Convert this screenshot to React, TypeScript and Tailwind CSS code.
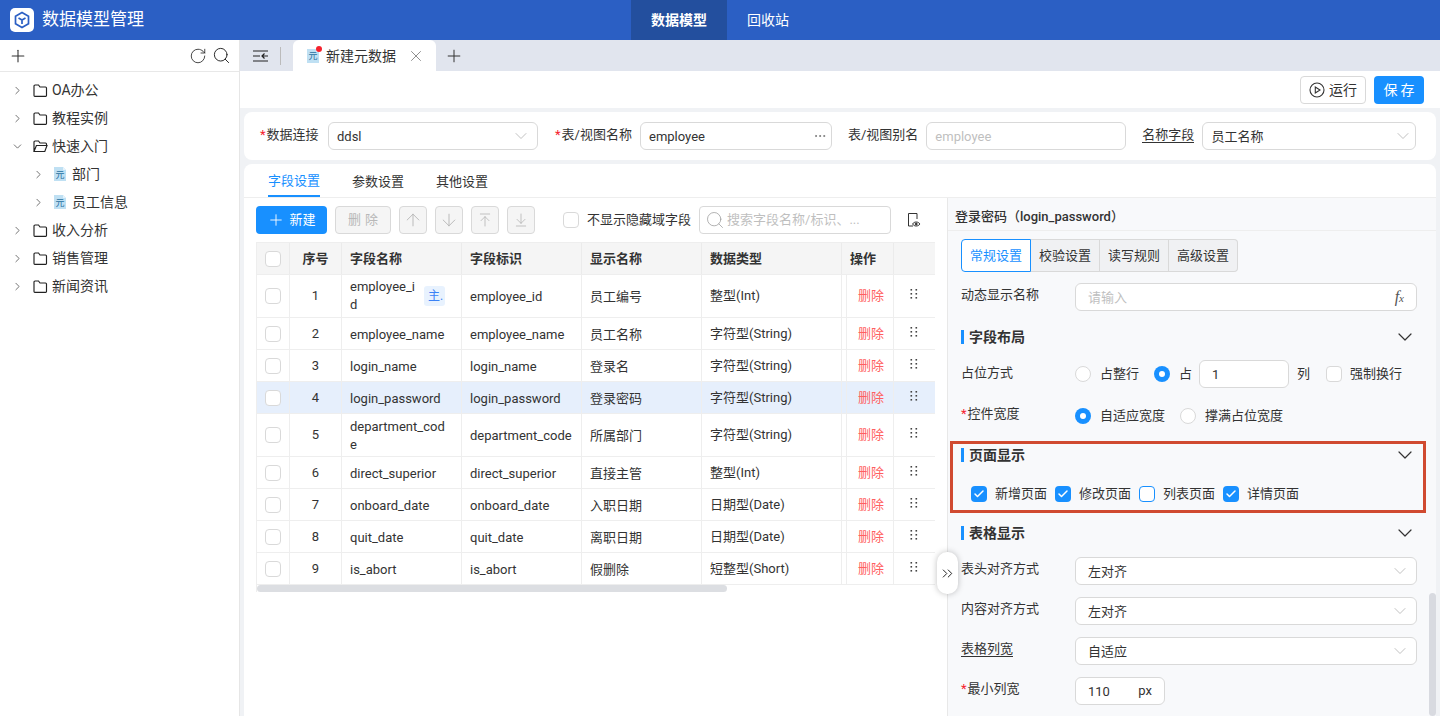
import React from "react";
import { ChevronRight, ChevronDown, Plus, RotateCw, Search, X, ArrowUp, ArrowDown, ArrowUpToLine, ArrowDownToLine, Ellipsis, ChevronsRight, Check } from "lucide-react";

const FONT = "font-['Roboto','Noto_Sans_CJK_SC',sans-serif]";

function Folder({ open }: { open?: boolean }) {
  return open ? (
    <svg width="15" height="13" viewBox="0 0 15 13" fill="none" stroke="#222" strokeWidth="1.15" className="shrink-0">
      <path d="M1 11.5V2a1 1 0 0 1 1-1h3.5l1.5 2h5.5a1 1 0 0 1 1 1v1.5M1 11.5h10.8l2.2-6H3.4L1 11.5z" />
    </svg>
  ) : (
    <svg width="15" height="13" viewBox="0 0 15 13" fill="none" stroke="#222" strokeWidth="1.15" className="shrink-0">
      <path d="M1 2a1 1 0 0 1 1-1h3.5l1.5 2h5.5a1 1 0 0 1 1 1v7.5a.8.8 0 0 1-.8.8H1.8a.8.8 0 0 1-.8-.8V2z" />
    </svg>
  );
}

function MetaIcon() {
  return (
    <span className="relative w-[14px] h-[14px] shrink-0 block">
      <svg width="14" height="14" viewBox="0 0 14 14" className="block">
        <path d="M1 0h9l3 3v11H1z" fill="#bfe0f3" />
        <path d="M10 0l3 3h-3z" fill="#e6f3fb" />
      </svg>
      <span className="absolute inset-0 flex items-center justify-center text-[9px] leading-none text-[#1f6f9f] pt-[2px]">元</span>
    </span>
  );
}

function TreeRow({ label, indent, open, meta }: { label: string; indent?: boolean; open?: boolean; meta?: boolean }) {
  return (
    <div className={`h-7 flex items-center text-[14px] text-[#333] ${indent ? "pl-[32px]" : "pl-[11px]"}`}>
      {open ? <ChevronDown size={13} strokeWidth={1.5} color="#555" /> : <ChevronRight size={13} strokeWidth={1.5} color="#555" />}
      <span className={`flex items-center ${meta ? "ml-[8px] gap-[5px]" : "ml-[9px] gap-[4px]"}`}>
        {meta ? <MetaIcon /> : <Folder open={open} />}
        <span>{label}</span>
      </span>
    </div>
  );
}

function Label({ children, req, under }: { children: React.ReactNode; req?: boolean; under?: boolean }) {
  return (
    <span className={`text-[13px] text-[#333] whitespace-nowrap ${under ? "border-b border-[#333] leading-[16px]" : ""}`}>
      {req && <span className="text-[#f5222d] mr-[1px]">*</span>}
      {children}
    </span>
  );
}

function Box({ className, children, muted }: { className?: string; children?: React.ReactNode; muted?: boolean }) {
  return (
    <div className={`h-7 border border-[#d9d9d9] rounded-[6px] bg-white flex items-center justify-between text-[13px] [&>span:first-child]:translate-y-px ${muted ? "text-[#bfbfbf]" : "text-[#333]"} ${className ?? ""}`}>
      {children}
    </div>
  );
}

const Chev = () => <ChevronDown size={20} strokeWidth={1.1} color="#bbb" />;

function IconBtn({ children }: { children: React.ReactNode }) {
  return (
    <div className="w-7 h-7 border border-[#d9d9d9] rounded-[4px] bg-[#f5f5f5] flex items-center justify-center text-[#b0b0b0]">
      {children}
    </div>
  );
}

function Cb({ className }: { className?: string }) {
  return <div className={`w-4 h-4 border border-[#d9d9d9] rounded-[4px] bg-white shrink-0 ${className ?? ""}`} />;
}

const rows = [
  { n: 1, name: "employee_id", id: "employee_id", disp: "员工编号", type: "整型(Int)", tall: true, pk: true },
  { n: 2, name: "employee_name", id: "employee_name", disp: "员工名称", type: "字符型(String)" },
  { n: 3, name: "login_name", id: "login_name", disp: "登录名", type: "字符型(String)" },
  { n: 4, name: "login_password", id: "login_password", disp: "登录密码", type: "字符型(String)", sel: true },
  { n: 5, name: "department_code", id: "department_code", disp: "所属部门", type: "字符型(String)", tall: true },
  { n: 6, name: "direct_superior", id: "direct_superior", disp: "直接主管", type: "整型(Int)" },
  { n: 7, name: "onboard_date", id: "onboard_date", disp: "入职日期", type: "日期型(Date)" },
  { n: 8, name: "quit_date", id: "quit_date", disp: "离职日期", type: "日期型(Date)" },
  { n: 9, name: "is_abort", id: "is_abort", disp: "假删除", type: "短整型(Short)" },
];

const colW = ["w-[33px]", "w-[52px]", "w-[120px]", "w-[120px]", "w-[120px]", "w-[140px]"];

function HeaderRow() {
  const hs = ["", "序号", "字段名称", "字段标识", "显示名称", "数据类型"];
  return (
    <div className="flex h-8 bg-[#f5f5f5] text-[13px] font-bold text-[#333] border-b border-[#eee]">
      {hs.map((h, i) => (
        <div key={i} className={`${colW[i]} shrink-0 border-r border-[#ebebeb] flex items-center ${i < 2 ? "justify-center" : "pl-2"}`}>
          {i === 0 ? <div className="w-4 h-4 border border-[#d9d9d9] rounded-[4px] bg-white" /> : h}
        </div>
      ))}
      <div className="w-[52px] shrink-0 border-r border-[#ebebeb] flex items-center pl-2">操作</div>
      <div className="flex-1" />
    </div>
  );
}

function Dots() {
  return (
    <svg width="10" height="12" viewBox="0 0 10 12" fill="#444">
      {[1, 5, 9].map((y) => (
        <g key={y}><rect x="1.5" y={y} width="1.6" height="1.6" /><rect x="6.5" y={y} width="1.6" height="1.6" /></g>
      ))}
    </svg>
  );
}

function Row({ r }: { r: (typeof rows)[number] }) {
  return (
    <div className={`flex ${r.tall ? "h-[43px]" : "h-8"} text-[13px] text-[#333] border-b border-[#eee] ${r.sel ? "bg-[#e6effc]" : "bg-white"}`}>
      <div className={`${colW[0]} shrink-0 border-r border-[#eee] flex items-center justify-center`}><Cb /></div>
      <div className={`${colW[1]} shrink-0 border-r border-[#eee] flex items-center justify-center`}>{r.n}</div>
      <div className={`${colW[2]} shrink-0 border-r border-[#eee] flex items-center pl-2`}>
        {r.pk ? (
          <>
            <span className="w-[66px] break-all leading-[18px]">{r.name}</span>
            <span className="ml-2 w-[21px] h-5 rounded-[3px] bg-[#e8f2fe] text-[#3b82f6] text-[12px] leading-5 whitespace-nowrap pl-[4px]">主.</span>
          </>
        ) : (
          <span className="max-w-[96px] break-all leading-[18px] translate-y-px">{r.name}</span>
        )}
      </div>
      <div className={`${colW[3]} shrink-0 border-r border-[#eee] flex items-center pl-2`}><span className="translate-y-px">{r.id}</span></div>
      <div className={`${colW[4]} shrink-0 border-r border-[#eee] flex items-center pl-2`}><span className="translate-y-px">{r.disp}</span></div>
      <div className={`${colW[5]} shrink-0 border-r border-[#eee] flex items-center pl-2`}>{r.type}</div>
      <div className="w-[5px] shrink-0 border-r border-[#eee]" />
      <div className="w-[47px] shrink-0 border-r border-[#eee] flex items-center pl-[11px] text-[#ff5f61]"><span>删除</span></div>
      <div className="flex-1 flex items-center justify-center pb-[4px] pr-[2px]"><Dots /></div>
    </div>
  );
}

function Section({ title }: { title: string }) {
  return (
    <div className="flex items-center justify-between pr-0">
      <div className="flex items-center text-[14px] font-bold text-[#333] leading-[14px]">
        <span className="w-[3px] h-[14px] bg-[#1890ff] mr-[5px]" />
        {title}
      </div>
      <ChevronDown size={24} strokeWidth={1.2} color="#333" className="-my-[5px]" />
    </div>
  );
}

function Radio({ on }: { on?: boolean }) {
  return on ? (
    <span className="w-4 h-4 rounded-full bg-[#1890ff] flex items-center justify-center shrink-0"><span className="w-[6px] h-[6px] rounded-full bg-white block" /></span>
  ) : (
    <span className="block w-4 h-4 rounded-full border border-[#d9d9d9] bg-white shrink-0" />
  );
}

function BlueCheck({ on, label }: { on?: boolean; label: string }) {
  return (
    <div className="flex items-center gap-2 w-[84px]">
      {on ? (
        <span className="w-4 h-4 rounded-[4px] bg-[#1890ff] flex items-center justify-center shrink-0"><Check size={12} strokeWidth={3} color="#fff" /></span>
      ) : (
        <span className="w-4 h-4 rounded-[4px] border border-[#1890ff] bg-white shrink-0" />
      )}
      <span className="text-[13px] text-[#333] whitespace-nowrap">{label}</span>
    </div>
  );
}

function FormRow({ label, children, className, lm }: { label: React.ReactNode; children: React.ReactNode; className?: string; lm?: string }) {
  return (
    <div className={`flex items-center ${className ?? ""}`}>
      <div className={`w-[114px] shrink-0 ${lm ?? "-mt-[6px]"}`}>{label}</div>
      {children}
    </div>
  );
}

const Tx = ({ className, children }: { className?: string; children: React.ReactNode }) => (
  <span className={`text-[13px] text-[#333] whitespace-nowrap ${className ?? ""}`}>{children}</span>
);

export default function App() {
  return (
    <div className={`${FONT} w-[1440px] h-[716px] overflow-hidden flex flex-col bg-white`}>
      <header className="h-10 shrink-0 bg-[#2b5fc4] flex items-center relative">
        <div className="w-[631px] flex items-center pl-[10px] gap-[8px] shrink-0">
          <div className="w-6 h-6 bg-white rounded-[5px] flex items-center justify-center">
            <svg width="18" height="18" viewBox="0 0 18 18" fill="none" stroke="#2b5fc4" strokeWidth="1.7">
              <path d="M9 1.5l6.5 3.7v7.6L9 16.5l-6.5-3.7V5.2z" />
              <path d="M5.5 7L9 9l3.5-2M9 9v4" />
            </svg>
          </div>
          <span className="text-[17px] text-white">数据模型管理</span>
        </div>
        <div className="h-10 w-24 bg-[#234f9e] flex items-center justify-center text-white text-[14px] font-bold">数据模型</div>
        <div className="h-10 w-[82px] flex items-center justify-center text-white text-[14px]">回收站</div>
      </header>

      <div className="flex-1 flex min-h-0">
        <aside className="w-[240px] shrink-0 border-r border-[#e6e6e6] bg-white">
          <div className="h-[32px] border-b border-[#e8e8e8] flex items-center justify-between pl-[8px] pr-[8px]">
            <Plus size={20} strokeWidth={1.3} color="#333" />
            <div className="flex items-center gap-[5px]">
              <RotateCw size={18} strokeWidth={1.1} color="#222" />
              <Search size={19} strokeWidth={1.2} color="#222" />
            </div>
          </div>
          <div className="pt-[4px]">
            <TreeRow label="OA办公" />
            <TreeRow label="教程实例" />
            <TreeRow label="快速入门" open />
            <TreeRow label="部门" indent meta />
            <TreeRow label="员工信息" indent meta />
            <TreeRow label="收入分析" />
            <TreeRow label="销售管理" />
            <TreeRow label="新闻资讯" />
          </div>
        </aside>

        <main className="flex-1 min-w-0 flex flex-col bg-[#f0f2f5]">
          <div className="h-[31px] shrink-0 bg-[#e1e5ee] flex items-stretch">
            <div className="w-[40px] flex items-center pl-[13px]">
              <svg width="16" height="12" viewBox="0 0 16 12" fill="none" stroke="#222" strokeWidth="1.2">
                <path d="M0 1h15M0 6h7M0 11h15M15 6H9M11.5 3.5L9 6l2.5 2.5" />
              </svg>
            </div>
            <div className="w-px h-[18px] bg-[#bbb] self-center" />
            <div className="ml-[12px] w-[143px] bg-white rounded-t-[6px] flex items-center pl-[13px] text-[14px] text-[#333] relative">
              <MetaIcon />
              <span className="absolute left-[23px] top-[6px] w-[6px] h-[6px] rounded-full bg-[#f5222d]" />
              <span className="ml-[6px] translate-y-px">新建元数据</span>
              <X size={18} strokeWidth={1.1} color="#777" className="ml-[11px]" />
            </div>
            <div className="w-[36px] flex items-center justify-center"><Plus size={20} strokeWidth={1.2} color="#333" /></div>
          </div>
          <div className="h-[37px] shrink-0 bg-white flex items-center justify-end gap-2 pr-[16px]">
            <div className="h-7 w-[66px] border border-[#d9d9d9] rounded-[4px] flex items-center justify-center gap-[4px] text-[14px] text-[#333]">
              <svg width="16" height="16" viewBox="0 0 16 16" fill="none" stroke="#333" strokeWidth="1.1">
                <circle cx="8" cy="8" r="7" />
                <path d="M6.3 5v6L11 8z" />
              </svg>
              <span className="translate-y-px">运行</span>
            </div>
            <div className="h-7 w-[50px] rounded-[4px] bg-[#1890ff] flex items-center justify-center text-white text-[14px] tracking-[3px] pl-[3px]"><span className="translate-y-px">保存</span></div>
          </div>

          <div className="h-[48px] shrink-0 mt-1 mx-1 bg-white rounded-[8px] flex items-center text-[13px]">
            <div className="pl-[16px] w-[84px] shrink-0 -mt-[3px]"><Label req>数据连接</Label></div>
            <Box className="w-[210px] pl-2 pr-[6px]"><span>ddsl</span><Chev /></Box>
            <div className="ml-[17px] shrink-0 -mt-[3px]"><Label req>表/视图名称</Label></div>
            <Box className="w-[192px] ml-[8px] pl-2 pr-[4px]"><span>employee</span><Ellipsis size={14} strokeWidth={1.3} color="#666" /></Box>
            <div className="ml-[16px] shrink-0 -mt-[3px]"><Label>表/视图别名</Label></div>
            <Box muted className="w-[200px] ml-[8px] pl-2"><span>employee</span></Box>
            <div className="ml-[16px] shrink-0 -mt-[3px]"><Label under>名称字段</Label></div>
            <Box className="w-[214px] ml-[8px] pl-2 pr-[2px]"><span>员工名称</span><Chev /></Box>
          </div>

          <div className="flex-1 min-h-0 mt-1 mx-1 bg-white rounded-t-[8px] flex flex-col">
            <div className="h-[34px] shrink-0 border-b border-[#eee] flex items-stretch pl-[24px] gap-[32px] text-[13px] text-[#333]">
              <div className="flex items-center text-[#1890ff] border-b-2 border-[#1890ff]"><span className="translate-y-px">字段设置</span></div>
              <div className="flex items-center"><span className="translate-y-px">参数设置</span></div>
              <div className="flex items-center"><span className="translate-y-px">其他设置</span></div>
            </div>
            <div className="flex-1 min-h-0 flex">
              <div className="w-[703px] shrink-0 relative z-10 pl-[12px] pr-[12px]">
                <div className="h-[28px] mt-[8px] flex items-center">
                  <div className="w-[71px] h-7 rounded-[4px] bg-[#1890ff] flex items-center justify-center gap-[4px] text-white text-[13px]">
                    <Plus size={18} strokeWidth={1.2} />新建
                  </div>
                  <div className="ml-2 w-[56px] h-7 rounded-[4px] border border-[#d9d9d9] bg-[#f5f5f5] flex items-center justify-center text-[#b8b8b8] text-[13px] tracking-[4px] pl-[4px]">删除</div>
                  <div className="ml-2 flex gap-[8px]">
                    <IconBtn><ArrowUp size={20} strokeWidth={1} /></IconBtn>
                    <IconBtn><ArrowDown size={20} strokeWidth={1} /></IconBtn>
                    <IconBtn><ArrowUpToLine size={16} strokeWidth={1.1} /></IconBtn>
                    <IconBtn><ArrowDownToLine size={16} strokeWidth={1.1} /></IconBtn>
                  </div>
                  <div className="ml-[28px] flex items-center gap-2 text-[13px] text-[#333] whitespace-nowrap"><Cb />不显示隐藏域字段</div>
                  <div className="ml-2 w-[192px] h-7 border border-[#d9d9d9] rounded-[4px] flex items-center pl-[5px] gap-[2px] text-[13px] text-[#bfbfbf] whitespace-nowrap">
                    <Search size={20} strokeWidth={0.9} color="#999" className="shrink-0" />搜索字段名称/标识、...
                  </div>
                  <div className="ml-[15px]">
                    <svg width="16" height="16" viewBox="0 0 16 16" fill="none" stroke="#333" strokeWidth="1">
                      <path d="M7 14H2.5V1.5H11V7" />
                      <path d="M6.5 12c1-1.4 2.2-2 3.7-2s2.7.6 3.8 2c-1.1 1.4-2.3 2-3.8 2s-2.7-.6-3.7-2z" />
                      <circle cx="10.2" cy="12" r="1" fill="#333" />
                    </svg>
                  </div>
                </div>
                <div className="mt-[8px] w-[679px] border-t border-l border-[#eee]">
                  <HeaderRow />
                  {rows.map((r) => <Row key={r.n} r={r} />)}
                  <div className="h-[7px] w-[470px] bg-[#dcdee2] rounded-[4px]" />
                </div>
                <div className="absolute right-[-11px] top-[354px] w-[21px] h-[42px] bg-white rounded-[10px] shadow-[0_0_6px_rgba(0,0,0,0.25)] flex items-center justify-center">
                  <ChevronsRight size={17} strokeWidth={1.4} color="#222" />
                </div>
              </div>

              <div className="flex-1 min-w-0 bg-[#f8f9fb] border-l border-[#e8e8e8] relative overflow-hidden">
                <div className="h-[33px] border-b border-[#eee] flex items-center pl-[7px] pt-[5px] text-[13px] text-[#333] font-medium">登录密码（login_password）</div>
                <div className="ml-[13px] mt-[8px] inline-flex text-[13px] text-[#333] h-[33px]">
                  <div className="w-[70px] border border-[#1890ff] rounded-l-[4px] bg-white text-[#1890ff] flex items-center justify-center">常规设置</div>
                  <div className="w-[69px] border-y border-r border-[#d9d9d9] bg-[#f0f1f3] flex items-center justify-center">校验设置</div>
                  <div className="w-[69px] border-y border-r border-[#d9d9d9] bg-[#f0f1f3] flex items-center justify-center">读写规则</div>
                  <div className="w-[69px] border-y border-r border-[#d9d9d9] rounded-r-[4px] bg-[#f0f1f3] flex items-center justify-center">高级设置</div>
                </div>

                <div className="pl-[13px] pr-[19px]">
                  <FormRow label={<Label>动态显示名称</Label>} className="mt-[11px]">
                    <Box muted className="w-[342px] pl-3 pr-3"><span>请输入</span><span className="font-['Liberation_Serif',serif] italic text-[#555] text-[16px] leading-none">f<span className="text-[11px]">x</span></span></Box>
                  </FormRow>
                  <div className="mt-[19px]"><Section title="字段布局" /></div>
                  <FormRow label={<Label>占位方式</Label>} lm="-mt-[4px]" className="mt-[16px] h-[28px]">
                    <Radio /><Tx className="ml-[9px]">占整行</Tx>
                    <div className="ml-[15px]"><Radio on /></div><Tx className="ml-[9px]">占</Tx>
                    <Box className="w-[90px] ml-[7px] pl-3"><span>1</span></Box>
                    <Tx className="ml-[8px]">列</Tx>
                    <Cb className="ml-[16px]" /><Tx className="ml-[8px]">强制换行</Tx>
                  </FormRow>
                  <FormRow label={<Label req>控件宽度</Label>} lm="-mt-[6px]" className="mt-[14px] h-[28px]">
                    <Radio on /><Tx className="ml-[9px]">自适应宽度</Tx>
                    <div className="ml-[15px]"><Radio /></div><Tx className="ml-[9px]">撑满占位宽度</Tx>
                  </FormRow>
                  <div className="mt-[11px] -ml-[11px] w-[476px] h-[72px] border-[3px] border-[#d04a30] pl-[8px] pr-[6px] pt-[4px]">
                    <Section title="页面显示" />
                    <div className="flex mt-[22px] pl-[10px]">
                      <BlueCheck on label="新增页面" />
                      <BlueCheck on label="修改页面" />
                      <BlueCheck label="列表页面" />
                      <BlueCheck on label="详情页面" />
                    </div>
                  </div>
                  <div className="mt-[13px]"><Section title="表格显示" /></div>
                  <FormRow label={<Label>表头对齐方式</Label>} className="mt-[17px]">
                    <Box className="w-[342px] pl-3 pr-[6px]"><span>左对齐</span><Chev /></Box>
                  </FormRow>
                  <FormRow label={<Label>内容对齐方式</Label>} className="mt-[12px]">
                    <Box className="w-[342px] pl-3 pr-[6px]"><span>左对齐</span><Chev /></Box>
                  </FormRow>
                  <FormRow label={<Label under>表格列宽</Label>} className="mt-[12px]">
                    <Box className="w-[342px] pl-3 pr-[6px]"><span>自适应</span><Chev /></Box>
                  </FormRow>
                  <FormRow label={<Label req>最小列宽</Label>} className="mt-[12px]">
                    <Box className="w-[90px] pl-3 pr-3"><span>110</span><span>px</span></Box>
                  </FormRow>
                </div>
                <div className="absolute right-0 top-[395px] bottom-0 w-[7px] bg-[#d8dae0] rounded-[4px]" />
              </div>
            </div>
          </div>
        </main>
      </div>
    </div>
  );
}
